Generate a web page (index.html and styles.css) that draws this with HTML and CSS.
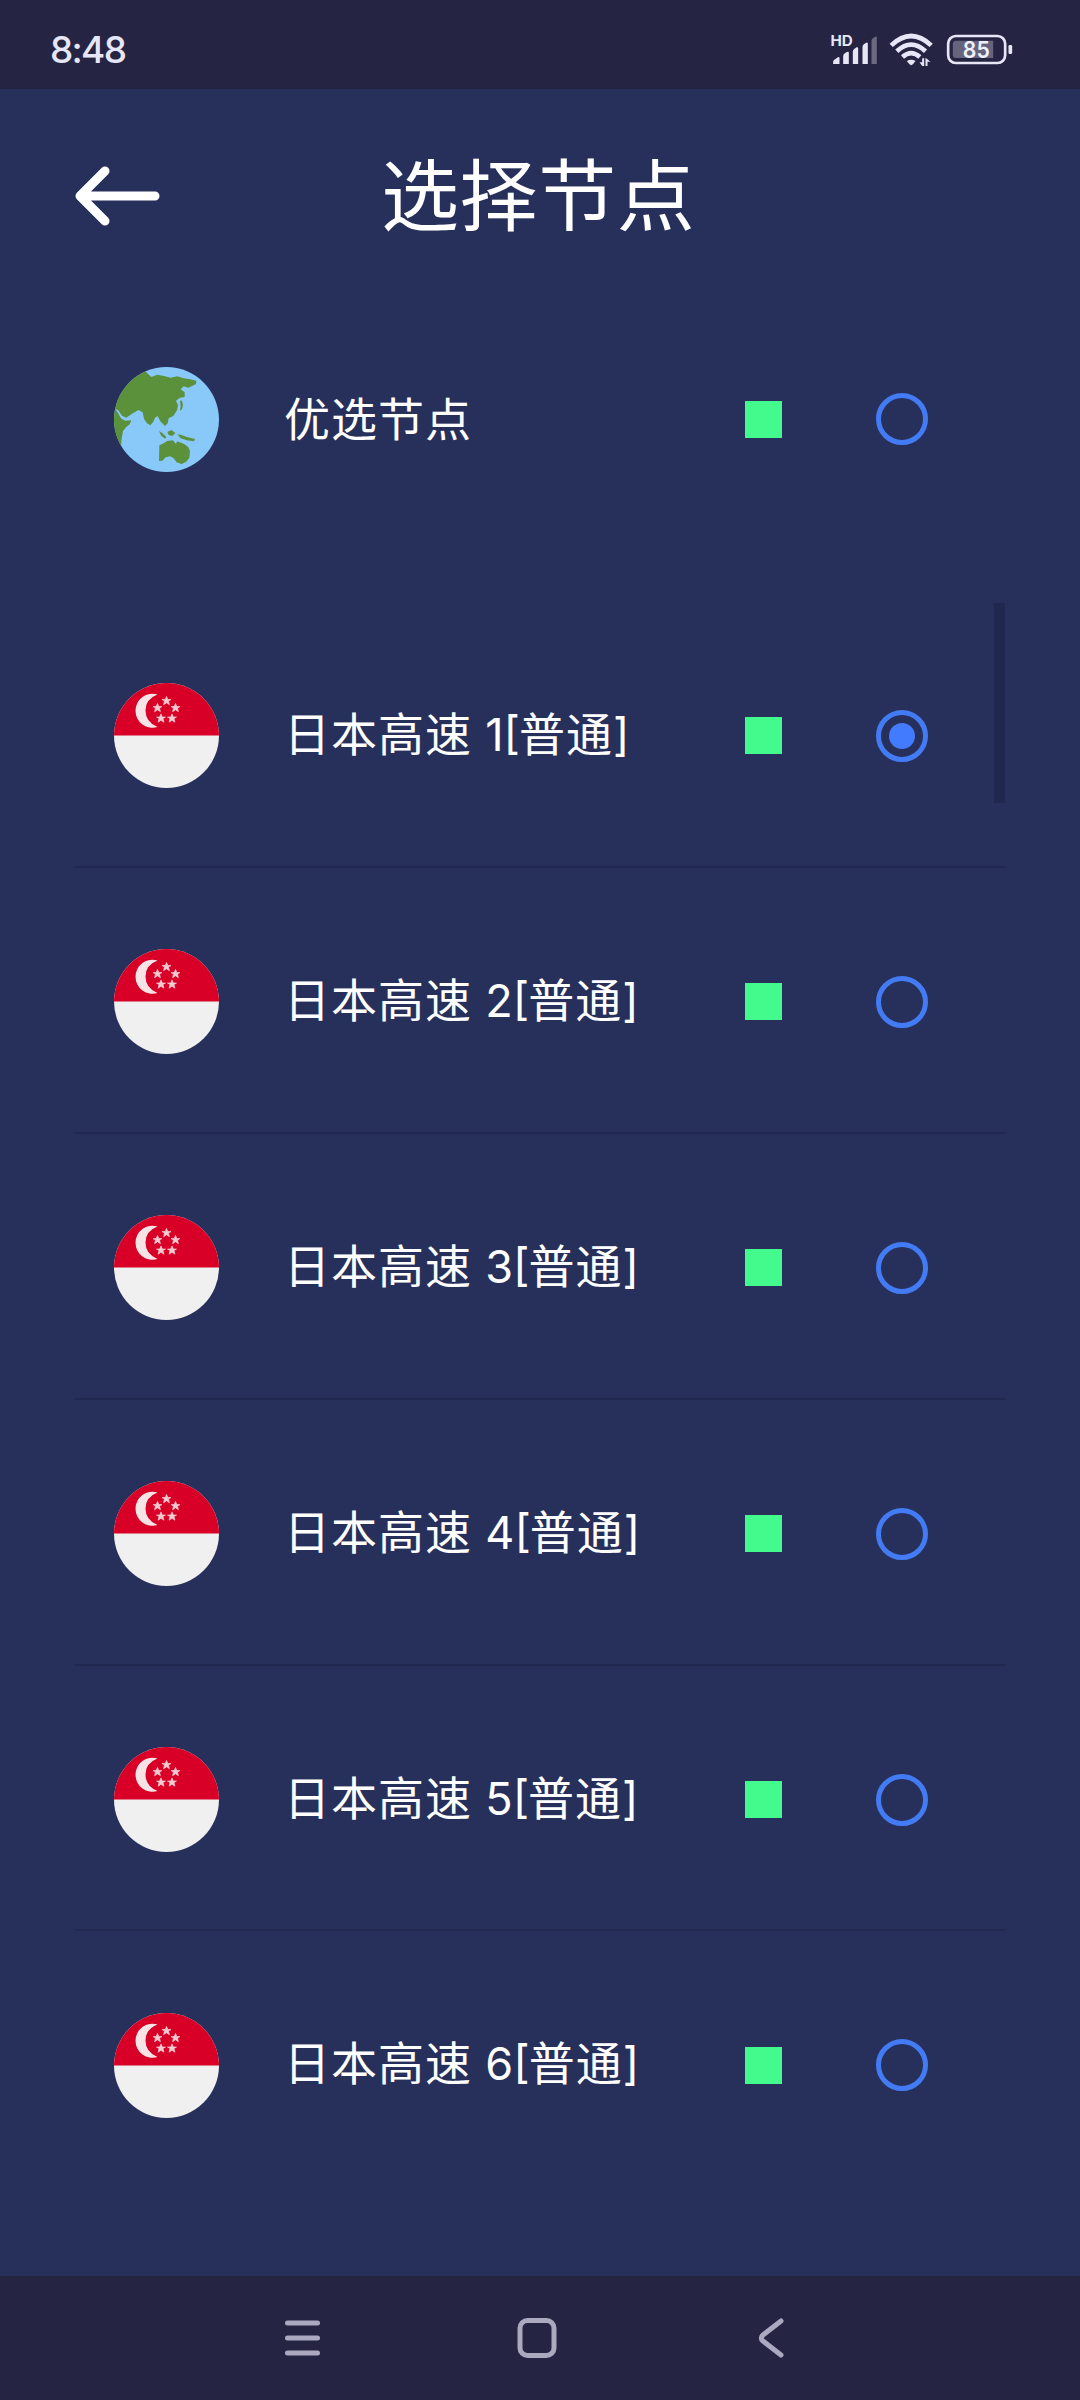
FILE: index.html
```
<!DOCTYPE html>
<html lang="zh-CN">
<head>
<meta charset="utf-8">
<title>选择节点</title>
<link rel="stylesheet" href="styles.css">
</head>
<body>
<svg class="defs" aria-hidden="true">
  <defs>
    <clipPath id="disc"><circle cx="52.5" cy="52.5" r="52.5"/></clipPath>
    <path id="star" d="M0-4.6L1.3-1.5 4.5-1.4 2-.1 2.9 3.7 0 1.8-2.9 3.7-2-.1-4.5-1.4-1.3-1.5z"/>
    <symbol id="flag" viewBox="0 0 105 105">
      <g clip-path="url(#disc)">
        <rect width="105" height="105" fill="#f0f0f0"/>
        <rect width="105" height="52.5" fill="#d80027"/>
        <path d="M43.500 11.500A17 17 0 1 0 43.500 44Q31.500 39 31.500 27.500T43.500 11.500z" fill="#f6e3e6"/>
        <g fill="#f3ccd2" stroke="#f3ccd2" stroke-width=".7">
          <use href="#star" x="52.5" y="18"/><use href="#star" x="43.5" y="25"/><use href="#star" x="61.5" y="25"/><use href="#star" x="47" y="35.5"/><use href="#star" x="58" y="35.5"/>
        </g>
      </g>
    </symbol>
  </defs>
</svg>
<div class="screen">
  <header class="status">
    <span class="clock">8:48</span>
    <svg class="indicators" viewBox="90 60 560 120">
      <g fill="#e6e6f6">
        <text class="hd" x="91" y="108" textLength="67" lengthAdjust="spacingAndGlyphs">HD</text>
        <path d="M99 162v-8q1-4 8-8l6-4q5-2 5 2v18zM129 162v-24q0-4 5-8l6-4q6-3 6 2v34zM158 162v-38q0-5 5-8l6-4q5-2 5 3v47zM187 162v-52q0-5 5-8l6-4q5-2 5 3v61z"/>
        <path d="M214 162V92q0-5 5-8l6-4q5-2 5 3v79z" fill="#6a697f"/>
        <path d="M320 153q13-8 26 0l-8 10q-5 5-10 0z"/>
        <path d="M358 157h8v-12h6v23h-6zM376 168v-25l15 12h-9v13z"/>
        <rect x="625" y="105" width="11" height="27" rx="4"/>
      </g>
      <g fill="none" stroke="#e6e6f6" stroke-width="14">
        <path d="M273 106Q333 50 393 106M290 124Q333 84 376 124M307 141Q333 118 359 141"/>
      </g>
      <rect x="444" y="78" width="171" height="81" rx="23" fill="none" stroke="#e6e6f6" stroke-width="8"/>
      <path d="M467 92h112v52h-112q-9 0-9-9v-34q0-9 9-9z" fill="#65647c"/>
      <text class="charge" x="488" y="143" textLength="81" lengthAdjust="spacingAndGlyphs" fill="#f0f0fa">85</text>
    </svg>
  </header>

  <div class="titlebar">
    <svg class="back" viewBox="0 0 86 60"><path d="M30 5L5 30L30 55M6 30H80" fill="none" stroke="#fff" stroke-width="9" stroke-linecap="round" stroke-linejoin="round"/></svg>
    <h1 class="title">选择节点</h1>
  </div>

  <main class="content">
    <div class="row best">
      <svg class="icon" viewBox="72 50 315 315">
        <clipPath id="globe"><circle cx="229.500" cy="207.500" r="157.500"/></clipPath>
        <g clip-path="url(#globe)">
          <rect x="72" y="50" width="315" height="315" fill="#88c9f9"/>
          <path d="M70 175L100 40 165 62 184 80 202 73 222 77 242 82 262 78 281 84 300 87 319 91 318 101 306 107 295 112 281 108 272 117 284 126 284 140 270 142 258 151 264 165 261 180 250 197 236 204 233 219 225 227 211 213 203 197 195 202 190 214 181 225 171 219 162 206 158 186 145 179 134 186 125 191 109 202 96 196 84 179z" fill="#5c913b"/>
          <path d="M70 168L84 188 94 205 106 211 124 210 119 222 108 231 99 242 95 265 93 290 70 280z" fill="#5c913b"/>
          <path d="M208 285L221 279 232 272 249 270 257 280 263 273 269 276 281 280 294 289 300 302 298 322 289 334 275 341 260 336 250 323 240 318 227 321 217 331 207 332zM207 242L217 248 229 260 226 265 214 257zM232 245L244 239 256 248 247 257 236 254zM262 252L275 254 290 260 315 266 312 273 290 270 272 264zM270 151h6l3 14-3 12-6 5 2-14z" fill="#5c913b"/>
        </g>
      </svg>
      <span class="name">优选节点</span>
      <span class="signal"></span>
      <span class="radio"></span>
    </div>

    <div class="list">
      <div class="row"><svg class="icon"><use href="#flag"/></svg><span class="name">日本高速 <span class="latin num">1[</span>普通<span class="latin">]</span></span><span class="signal"></span><span class="radio checked"></span></div>
      <div class="row"><svg class="icon"><use href="#flag"/></svg><span class="name">日本高速 <span class="latin num">2[</span>普通<span class="latin">]</span></span><span class="signal"></span><span class="radio"></span></div>
      <div class="row"><svg class="icon"><use href="#flag"/></svg><span class="name">日本高速 <span class="latin num">3[</span>普通<span class="latin">]</span></span><span class="signal"></span><span class="radio"></span></div>
      <div class="row"><svg class="icon"><use href="#flag"/></svg><span class="name">日本高速 <span class="latin num">4[</span>普通<span class="latin">]</span></span><span class="signal"></span><span class="radio"></span></div>
      <div class="row"><svg class="icon"><use href="#flag"/></svg><span class="name">日本高速 <span class="latin num">5[</span>普通<span class="latin">]</span></span><span class="signal"></span><span class="radio"></span></div>
      <div class="row"><svg class="icon"><use href="#flag"/></svg><span class="name">日本高速 <span class="latin num">6[</span>普通<span class="latin">]</span></span><span class="signal"></span><span class="radio"></span></div>
      <div class="scrollbar"></div>
    </div>
  </main>

  <nav class="navbar">
    <svg viewBox="0 0 40 42"><path d="M5.500 6H35.500M5.500 21H35.500M5.500 36H35.500"/></svg>
    <svg viewBox="0 0 40 42"><rect x="3" y="3.500" width="34" height="35" rx="7.500"/></svg>
    <svg viewBox="0 0 40 42"><path d="M30 4L12 18Q8.500 21 12 24L30 38"/></svg>
  </nav>
</div>
</body>
</html>
```

FILE: styles.css
```
* { box-sizing: border-box; }

body {
  margin: 0;
  background: #27305a;
  color: #fff;
  font-family: "Noto Sans CJK SC", sans-serif;
}

.defs { display: block; width: 0; height: 0; }

.screen {
  display: flex;
  flex-direction: column;
  width: 1080px;
  height: 2400px;
  overflow: hidden;
}

.status {
  display: flex;
  flex: none;
  justify-content: space-between;
  height: 89px;
  padding: 30px 63px 0 50px;
  background: #262443;
}

.clock {
  color: #e6e6f6;
  font: 500 37px/40px Inter, sans-serif;
  letter-spacing: -1.7px;
}

.indicators { width: 187px; height: 40px; }
.hd { font: 700 43px Inter, sans-serif; }
.charge { font: 600 68px Inter, sans-serif; }

.titlebar {
  display: grid;
  flex: none;
  grid-template-columns: 86px 1fr;
  align-items: center;
  height: 214px;
  padding-left: 75px;
}

.back { width: 86px; height: 60px; }

.title {
  margin: 0 0 0 220px;
  padding-bottom: 10px;
  font-size: 78px;
  font-weight: 400;
  line-height: 100px;
  letter-spacing: 0.6px;
}

.content {
  flex: 1;
  padding: 0 75px;
}

.row {
  display: grid;
  grid-template-columns: 105px 1fr 131px 52px;
  align-items: center;
  height: 265.9px;
  padding: 4px 77px 0 39px;
  border-bottom: 2px solid #222950;
}

.row:nth-child(6) { border-color: transparent; }

.best {
  height: 232px;
  padding-top: 0;
  border: 0;
}

.list {
  position: relative;
  margin-top: 67px;
}

.icon { width: 105px; height: 105px; }

.name {
  padding: 0 0 6px 65px;
  font-size: 46px;
  line-height: 60px;
  letter-spacing: 1px;
  white-space: pre;
}

.latin {
  font-family: Inter, sans-serif;
  font-size: 45px;
  letter-spacing: 0;
}

.num { margin: 0 -1px 0 2px; }

.signal {
  width: 37px;
  height: 37px;
  background: #43fb8c;
}

.radio {
  display: grid;
  place-items: center;
  width: 52px;
  height: 52px;
  border: 5px solid #437bf5;
  border-radius: 50%;
}

.checked::after {
  content: "";
  width: 26px;
  height: 26px;
  border-radius: 50%;
  background: #437bff;
}

.scrollbar {
  position: absolute;
  top: 1px;
  right: 0;
  width: 11px;
  height: 200px;
  background: #20284f;
}

.navbar {
  display: flex;
  flex: none;
  justify-content: space-between;
  height: 124px;
  padding: 41px 289px 0 282px;
  background: #262443;
}

.navbar svg {
  width: 40px;
  height: 42px;
  fill: none;
  stroke: #aaa9c0;
  stroke-width: 5;
  stroke-linecap: round;
}
```
